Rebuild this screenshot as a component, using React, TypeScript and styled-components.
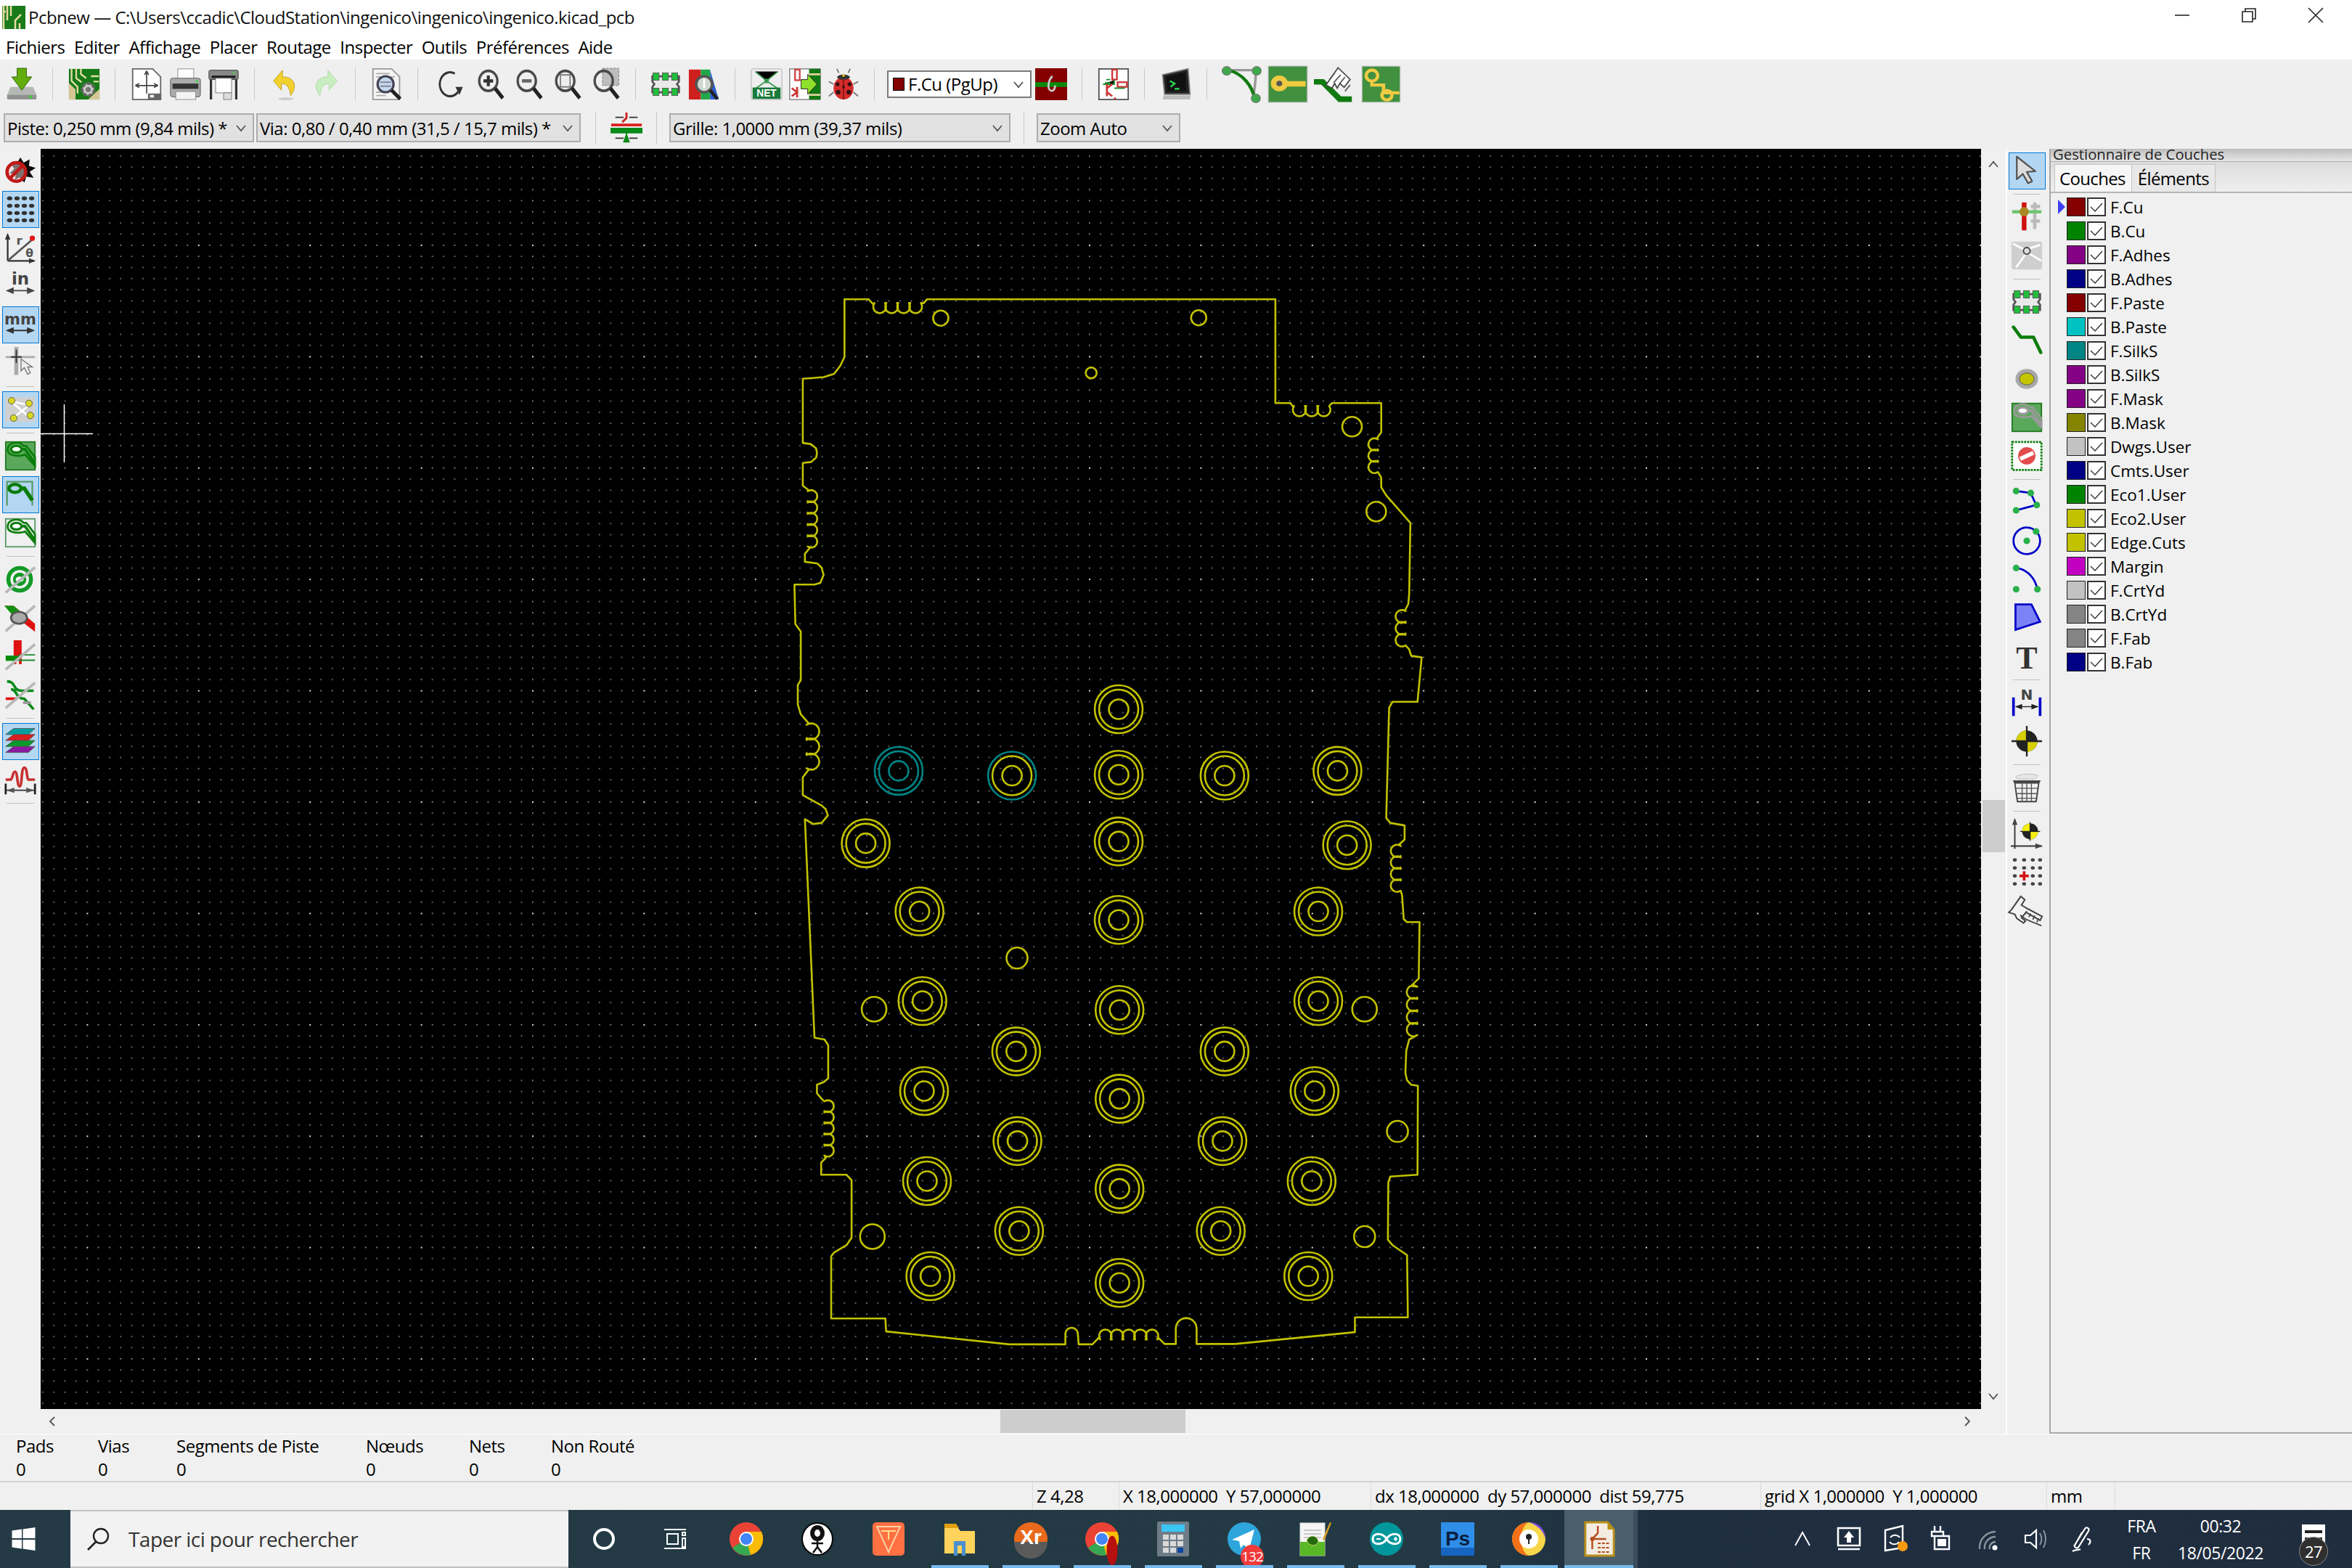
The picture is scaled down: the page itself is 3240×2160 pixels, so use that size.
import React from 'react';
import styled, { createGlobalStyle } from 'styled-components';

const GlobalStyle = createGlobalStyle`
  html, body { margin: 0; padding: 0; background: #f0f0f0; }
  body { font-family: "Open Sans", "Liberation Sans", sans-serif; }
`;

const Window = styled.div`
  width: 3240px;
  height: 2160px;
  display: flex;
  flex-direction: column;
  overflow: hidden;
  font-size: 24px;
  letter-spacing: -0.5px;
  color: #000;
`;

const TitleBar = styled.div`
  height: 50px;
  box-sizing: border-box;
  background: #fff;
  display: flex;
  align-items: center;
  padding: 0 6px 3px 3px;
  gap: 4px;
  color: #111;
`;

const TitleText = styled.div`
  flex: 1;
  white-space: pre;
`;

const WinButton = styled.div`
  width: 88px;
  height: 40px;
  margin-top: -6px;
  display: flex;
  align-items: center;
  justify-content: center;
`;

const MenuBar = styled.div`
  height: 32px;
  box-sizing: border-box;
  background: #fff;
  display: flex;
  gap: 12.5px;
  padding: 0 0 3px 8px;
  align-items: center;
`;

const Toolbar = styled.div<{ $h: number; $pt?: number }>`
  height: ${p => p.$h}px;
  box-sizing: border-box;
  padding-top: ${p => p.$pt ?? 0}px;
  background: #efefef;
  display: flex;
  align-items: center;
  padding-left: 3px;
  flex: none;
`;

const Tool = styled.div<{ $w?: number }>`
  width: ${p => p.$w ?? 53}px;
  height: 54px;
  flex: none;
  display: flex;
  align-items: center;
  justify-content: center;
`;

const HSep = styled.div<{ $w?: number }>`
  width: ${p => p.$w ?? 33}px;
  height: 44px;
  flex: none;
  display: flex;
  justify-content: center;
  &::before { content: ''; width: 1px; background: #c8c8c8; }
`;

const Combo = styled.div<{ $w: number; $white?: boolean; $ml?: number }>`
  width: ${p => p.$w}px;
  height: ${p => (p.$white ? 38 : 40)}px;
  margin-left: ${p => p.$ml ?? 0}px;
  box-sizing: border-box;
  flex: none;
  border: 2px solid ${p => (p.$white ? '#7a7a7a' : '#adadad')};
  background: ${p => (p.$white ? '#fff' : '#e1e1e1')};
  display: flex;
  align-items: center;
  padding: 0 8px 0 3px;
  white-space: pre;
  justify-content: space-between;
`;

const ComboLabel = styled.span`
  display: flex;
  align-items: center;
  gap: 5px;
`;

const LayerDot = styled.span`
  width: 14px;
  height: 16px;
  background: #840000;
  border: 1px solid #000;
  margin-left: 3px;
`;

const Middle = styled.div`
  flex: 1;
  display: flex;
  min-height: 0;
`;

const VToolbar = styled.div<{ $w: number }>`
  width: ${p => p.$w}px;
  flex: none;
  background: #f0f0f0;
  display: flex;
  flex-direction: column;
  align-items: center;
  gap: 2px;
  padding-top: 4.5px;
  box-sizing: border-box;
`;

const VTool = styled.div<{ $active?: boolean }>`
  width: 51px;
  height: 51px;
  flex: none;
  box-sizing: border-box;
  display: flex;
  align-items: center;
  justify-content: center;
  background: ${p => (p.$active ? '#b3d7f3' : 'transparent')};
  border: 1px solid ${p => (p.$active ? '#0078d7' : 'transparent')};
`;

const VSep = styled.div`
  width: 38px;
  height: 9px;
  flex: none;
  display: flex;
  align-items: center;
  &::before { content: ''; flex: 1; height: 1px; background: #c0c0c0; }
`;

const CanvasColumn = styled.div`
  width: 2707px;
  flex: none;
  display: flex;
  flex-direction: column;
`;

const CanvasRow = styled.div`
  flex: 1;
  display: flex;
  min-height: 0;
`;

const Canvas = styled.svg`
  width: 2673px;
  height: 1736px;
  display: block;
  background: #000;
  flex: none;
`;

const VScroll = styled.div`
  flex: 1;
  background: #f0f0f0;
  display: flex;
  flex-direction: column;
  align-items: center;
  justify-content: space-between;
  position: relative;
  padding: 14px 0 10px;
`;

const VThumb = styled.div`
  position: absolute;
  top: 897px;
  left: 2px;
  right: 1px;
  height: 72px;
  background: #cdcdcd;
`;

const HScroll = styled.div`
  height: 34px;
  background: #f0f0f0;
  display: flex;
  align-items: center;
  justify-content: space-between;
  position: relative;
  padding: 0 45px 0 8px;
  flex: none;
`;

const HThumb = styled.div`
  position: absolute;
  left: 1322px;
  top: 1px;
  bottom: 1px;
  width: 255px;
  background: #cdcdcd;
`;

const WhiteLine = styled.div`
  width: 2px;
  background: #fff;
  flex: none;
`;

const Sash = styled.div`
  width: 4px;
  flex: none;
  background: #f0f0f0;
`;

const LayerPanel = styled.div`
  flex: 1;
  border-left: 2px solid #a8a8a8;
  border-bottom: 2px solid #a8a8a8;
  background: #f0f0f0;
  display: flex;
  flex-direction: column;
`;

const PanelCaption = styled.div`
  height: 17px;
  line-height: 14px;
  font-size: 20.3px;
  letter-spacing: 0;
  padding-left: 3px;
  color: #222;
  background: linear-gradient(#bdbdbd, #e6e6e6);
  border-bottom: 1px solid #b0b0b0;
`;

const TabStrip = styled.div`
  height: 41px;
  display: flex;
  align-items: flex-end;
  padding-left: 5px;
  background: linear-gradient(#dcdcdc, #efefef);
  border-bottom: 2px solid #b4b4b4;
`;

const Tab = styled.div<{ $active?: boolean }>`
  height: 38px;
  box-sizing: border-box;
  padding: 0 8px 0 ${p => (p.$active ? 6 : 8)}px;
  display: flex;
  align-items: center;
  border: 1px solid #c4c4c4;
  border-bottom: none;
  margin-left: ${p => (p.$active ? 0 : -1)}px;
  background: ${p => (p.$active ? '#f6f6f6' : '#e8e8e8')};
  letter-spacing: -0.65px;
`;

const LayerList = styled.div`
  display: flex;
  flex-direction: column;
  gap: 7px;
  padding: 6px 0 0 22px;
`;

const LayerRow = styled.div`
  height: 26px;
  display: flex;
  align-items: center;
  position: relative;
  letter-spacing: 0;
  font-size: 22.5px;
`;

const ActiveArrow = styled.span`
  position: absolute;
  left: -12px;
  top: 3px;
  border-left: 10px solid #3f3ff5;
  border-top: 10px solid transparent;
  border-bottom: 10px solid transparent;
`;

const Swatch = styled.span<{ $c: string }>`
  width: 26px;
  height: 26px;
  box-sizing: border-box;
  border: 1px solid #222;
  background: ${p => p.$c};
`;

const Check = styled.span`
  width: 26px;
  height: 26px;
  box-sizing: border-box;
  border: 2px solid #333;
  background: #fff;
  margin: 0 6px 0 2px;
  display: flex;
  align-items: center;
  justify-content: center;
`;

const MsgPanel = styled.div`
  height: 67px;
  flex: none;
  border-bottom: 2px solid #d4d4d4;
  border-top: 1px solid #fff;
  background: #f0f0f0;
  display: flex;
  padding-left: 22px;
  box-sizing: border-box;
`;

const MsgCol = styled.div<{ $w: number }>`
  width: ${p => p.$w}px;
  display: flex;
  flex-direction: column;
  gap: 5px;
  padding-top: 2px;
  line-height: 27px;
`;

const StatusBar = styled.div`
  height: 38px;
  flex: none;
  background: #f0f0f0;
  display: flex;
`;

const StatusCell = styled.div<{ $w: number }>`
  width: ${p => p.$w}px;
  box-sizing: border-box;
  border-right: 1px solid #dcdcdc;
  padding: 0 0 2px 5px;
  display: flex;
  align-items: center;
  white-space: pre;
`;

const Taskbar = styled.div`
  height: 80px;
  flex: none;
  display: flex;
  align-items: stretch;
  background: linear-gradient(90deg, #243a45 0%, #233944 60%, #1f2e40 72%, #1f2d3f 100%);
  color: #fff;
`;

const StartButton = styled.div`
  width: 97px;
  flex: none;
  display: flex;
  align-items: center;
  justify-content: center;
  padding-right: 32px;
  box-sizing: border-box;
`;

const SearchBox = styled.div`
  width: 686px;
  flex: none;
  box-sizing: border-box;
  background: #f2f2f2;
  border: 2px solid #c0c0c0;
  border-left: none;
  border-right: none;
  display: flex;
  align-items: center;
  gap: 26px;
  padding-left: 22px;
  color: #333;
  font-size: 28px;
  letter-spacing: -0.55px;
`;

const TaskSlot = styled.div<{ $running?: boolean; $current?: boolean }>`
  width: ${p => (p.$current ? 95 : 98)}px;
  flex: none;
  position: relative;
  display: flex;
  align-items: center;
  justify-content: center;
  background: ${p => (p.$current ? '#4a5e6c' : 'transparent')};
  &::after {
    content: '';
    display: ${p => (p.$running ? 'block' : 'none')};
    position: absolute;
    left: ${p => (p.$current ? 0 : 10)}px;
    right: ${p => (p.$current ? 0 : 9)}px;
    bottom: 0;
    height: 4px;
    background: #76b9ed;
  }
`;

const TaskOverlay = styled.div`
  position: absolute;
  left: 50px;
  top: 34px;
`;

const TaskBadge = styled.div`
  position: absolute;
  left: 44px;
  top: 48px;
  width: 32px;
  height: 32px;
  border-radius: 50%;
  background: #f03a3a;
  color: #fff;
  font-size: 19px;
  letter-spacing: -1px;
  display: flex;
  align-items: center;
  justify-content: center;
`;

const CurrentEdge = styled.div`
  width: 6px;
  flex: none;
  background: #3b4d5c;
`;

const TrayGroup = styled.div`
  margin-left: auto;
  display: flex;
  align-items: stretch;
`;

const TraySlot = styled.div`
  width: 64px;
  display: flex;
  align-items: center;
  justify-content: center;
`;

const ClockCol = styled.div<{ $w: number; $ml?: number }>`
  width: ${p => p.$w}px;
  margin-left: ${p => p.$ml ?? 0}px;
  display: flex;
  flex-direction: column;
  align-items: center;
  justify-content: center;
  gap: 9px;
  line-height: 28px;
  letter-spacing: -0.4px;
  font-size: 23px;
`;

const NotifySlot = styled.div`
  width: 107px;
  position: relative;
  display: flex;
  align-items: center;
  justify-content: center;
`;

const NotifyBadge = styled.div`
  position: absolute;
  left: 34px;
  top: 37px;
  width: 38px;
  height: 38px;
  border-radius: 50%;
  background: #2f2f2f;
  border: 1px solid #888;
  display: flex;
  align-items: center;
  justify-content: center;
  font-size: 22px;
`;

const IconSvg = styled.svg<{ $w: number; $h: number }>`
  width: ${p => p.$w}px;
  height: ${p => p.$h}px;
  display: block;
  flex: none;
  overflow: visible;
`;

const Mag = ({ children }: { children?: React.ReactNode }) => (
  <>
    {children}
    <circle cx="20" cy="19" r="15" fill="none" stroke="#4a4a4a" strokeWidth="4" />
    <path d="M31 30 44 45" stroke="#222" strokeWidth="6" />
  </>
);

const Footprint = ({ color = '#1fbf3a' }: { color?: string }) => (
  <>
    <path d="M4 12h40v8l-3 4 3 4v8H4v-8l3-4-3-4z" fill="#e9e9e9" stroke="#555" strokeWidth="3" />
    {[5, 19, 33].map(x => (
      <React.Fragment key={x}>
        <rect x={x} y="7" width="9" height="11" fill={color} stroke="#555" />
        <rect x={x} y="30" width="9" height="11" fill={color} stroke="#555" />
      </React.Fragment>
    ))}
  </>
);

/* pad with a track leaving it, used by the zone tools */
const Zone = ({ fill, outer, body }: { fill?: string; outer: string; body: string }) => (
  <>
    <rect x="2" y="3" width="44" height="42" fill={fill ?? 'none'} stroke={outer} strokeWidth="2" />
    <path d="M5 15C5 7 12 4 18 4c5 0 8 2 11 5h4l13 17v13L31 22c-8 3-26 3-26-7z" fill="none" stroke={body} strokeWidth="3" />
    <ellipse cx="18" cy="14" rx="8" ry="5" fill="#fff" stroke={body} strokeWidth="3.5" />
    <path d="M27 14h4l12 17v5" fill="none" stroke={body} strokeWidth="4" />
  </>
);

const Diagonal = () => <path d="M2 44 46 6" stroke="#b8b8b8" strokeWidth="4" />;

const icons: Record<string, React.ReactNode> = {
  save: <><path d="M7 28h34l5 12v5a2 2 0 0 1-2 2H4a2 2 0 0 1-2-2v-5z" fill="#b5b8b5" /><path d="M2 40h44v5a2 2 0 0 1-2 2H4a2 2 0 0 1-2-2z" fill="#8f928f" /><rect x="35" y="41" width="4" height="4" fill="#34d034" /><path d="M17 0h14v13h8L24 33 9 13h8z" fill="#62ad0c" stroke="#2a5e00" /></>,
  setup: <><rect x="1" y="1" width="46" height="46" fill="#167a16" /><path d="M1 47V22l10 10v15zM30 47l17-16v16z" fill="#d7c695" /><path d="M5 1v18l9 9v10M12 1v14l8 6M19 1v8l8 6M34 12h12M38 20h8" stroke="#e8dca8" strokeWidth="2.5" fill="none" /><circle cx="30" cy="32" r="9" fill="#cfcfcf" stroke="#666" strokeWidth="4" strokeDasharray="6 2" /><circle cx="30" cy="32" r="4" fill="#777" /></>,
  page: <><path d="M3 1h30l12 12v34H3z" fill="#fff" stroke="#666" strokeWidth="2" /><path d="M24 4v34M7 26h34M24 4l-3 6M24 4l3 6M7 26l6-3M7 26l6 3M41 26l-6-3M41 26l-6 3" stroke="#444" strokeWidth="1.8" /><rect x="26" y="38" width="20" height="9" fill="#666" /><rect x="29" y="40" width="6" height="4" fill="#eee" /></>,
  print: <><rect x="13" y="1" width="24" height="16" fill="#fff" stroke="#888" /><rect x="2" y="15" width="45" height="28" rx="3" fill="#a9acab" stroke="#555" /><rect x="5" y="23" width="39" height="8" fill="#333" /><rect x="10" y="35" width="30" height="12" fill="#f4f4f4" stroke="#888" /><rect x="40" y="18" width="3" height="3" fill="#3bd13b" /></>,
  plot: <><rect x="2" y="3" width="44" height="14" rx="2" fill="#888" stroke="#333" /><rect x="6" y="11" width="36" height="4" fill="#222" /><rect x="12" y="15" width="24" height="22" fill="#fff" stroke="#777" /><path d="M24 37h12v10H24z" fill="#ddd" stroke="#777" /><path d="M5 17v30M43 17v30" stroke="#333" strokeWidth="3.5" /><rect x="38" y="5" width="3" height="3" fill="#3bd13b" /></>,
  undo: <><path d="M18 3 2 19l14 14V23c8 0 14 4 16 18 6-6 8-12 6-18-2-7-10-10-20-10z" fill="#f2d12e" stroke="#b8991d" /><ellipse cx="24" cy="46" rx="13" ry="2" fill="#ccc" /></>,
  redo: <><path d="M30 3l16 16-14 14V23c-8 0-14 4-16 18-6-6-8-12-6-18 2-7 10-10 20-10z" fill="#c8edc0" stroke="#a9d9a0" /></>,
  find: <><path d="M3 1h28l12 12v34H3z" fill="#f4f4f4" stroke="#999" strokeWidth="2" /><path d="M8 8h20M8 13h28M8 36h14M8 41h14" stroke="#aaa" strokeWidth="2" /><circle cx="22" cy="24" r="12" fill="#c4d8ee" stroke="#445" strokeWidth="3.5" /><path d="M14 21h16M14 27h16" stroke="#889" strokeWidth="2" /><path d="M31 33 44 46" stroke="#222" strokeWidth="5.5" /></>,
  refresh: <><path d="M31 8a18 18 0 1 0 8 24" fill="none" stroke="#333" strokeWidth="3.5" /><path d="M32 28h13l-6 12z" fill="#333" /></>,
  zin: <Mag><path d="M20 11v16M12 19h16" stroke="#333" strokeWidth="5" /></Mag>,
  zout: <Mag><path d="M12 19h16" stroke="#666" strokeWidth="5" /></Mag>,
  zfit: <Mag><rect x="12" y="10" width="16" height="18" fill="#eee" stroke="#777" strokeWidth="2" /></Mag>,
  zsel: <Mag><rect x="18" y="0" width="27" height="26" fill="#bdbdbd" stroke="#777" strokeDasharray="4 2" /></Mag>,
  inspect: <><rect x="1" y="2" width="18" height="45" fill="#d01f1f" /><rect x="19" y="2" width="14" height="45" fill="#21a84a" /><path d="M33 3l13 44H33z" fill="#2a5fd0" /><circle cx="24" cy="24" r="12" fill="#cfd8cf" stroke="#555" strokeWidth="4" /><path d="M24 16v14" stroke="#fff" strokeWidth="3" /><path d="M33 33 44 46" stroke="#222" strokeWidth="5" /></>,
  net: <><rect x="1" y="1" width="46" height="46" rx="2" fill="#eee" stroke="#aaa" /><path d="M7 5 24 19 41 5M24 19 8 30M24 19l16 11" stroke="#3a9a50" strokeWidth="2" /><circle cx="24" cy="19" r="3.5" fill="#3a9a50" /><rect x="3" y="29" width="42" height="17" fill="#1a7a3a" /><text x="24" y="43" fill="#fff" fontSize="15" fontWeight="700" textAnchor="middle" fontFamily="Liberation Sans" letterSpacing="0">NET</text></>,
  imp: <><rect x="1" y="1" width="46" height="46" fill="#fff" stroke="#444" /><path d="M30 1h17v46H30z" fill="#127a12" /><rect x="9" y="2" width="7" height="16" fill="none" stroke="#c44" strokeWidth="2.5" /><path d="M4 30l8 6-8 6M12 28v16" stroke="#c33" strokeWidth="3" fill="none" /><path d="M30 9h17M30 40h17" stroke="#e0d2a0" strokeWidth="3" /><path d="M18 17h10V9l14 15-14 15v-8H18z" fill="#8fe02a" stroke="#222" /></>,
  bug: <><ellipse cx="24" cy="30" rx="15" ry="17" fill="#d52a2a" /><path d="M24 13v34" stroke="#611" strokeWidth="1.5" /><circle cx="15" cy="24" r="3" fill="#311" /><circle cx="33" cy="24" r="3" fill="#311" /><circle cx="16" cy="36" r="3.5" fill="#311" /><circle cx="32" cy="36" r="3.5" fill="#311" /><circle cx="24" cy="28" r="2" fill="#311" /><path d="M14 14c2-6 18-6 20 0l-5 3H19z" fill="#333" /><circle cx="24" cy="11" r="2" fill="#e8c520" /><path d="M17 7 14 1M31 7l3-6M9 24 2 20M39 24l7-4M9 36l-7 6M39 36l7 6" stroke="#777" strokeWidth="2" /></>,
  via: <><rect x="0" y="0" width="48" height="48" fill="#840000" /><path d="M0 21h48v7H0z" fill="#0a8a0a" /><path d="M26 12c-3 2-6 8-6 15 0 4 2 7 5 7s5-4 5-8" fill="none" stroke="#ccc" strokeWidth="3" /></>,
  sch: <><rect x="2" y="1" width="44" height="46" fill="#fff" stroke="#555" strokeWidth="2" /><rect x="22" y="2" width="7" height="15" fill="none" stroke="#c33" strokeWidth="2.5" /><rect x="30" y="21" width="14" height="7" fill="none" stroke="#c33" strokeWidth="2.5" /><path d="M25 18v6H8M19 17h-6M19 22h-8" stroke="#1a8a2a" strokeWidth="2" /><path d="M14 24v18M14 30l8-6M14 36l8 6M26 44v3" stroke="#c33" strokeWidth="3" /><path d="M25 30h16" stroke="#1a8a2a" strokeWidth="2" /></>,
  term: <><path d="M4 10 42 1l3 38H7z" fill="#222" stroke="#777" strokeWidth="2" /><path d="M9 13l29-7 2 28H11z" fill="#111" /><path d="M15 19l7 4-6 5M22 31h7" stroke="#2fe05a" strokeWidth="2.5" fill="none" /><path d="M5 41h41l-1 6H4z" fill="#bdbdbd" /></>,
  route: <><path d="M7 6h36M41 8c0 16-3 28-3 36" stroke="#999" strokeWidth="3" fill="none" /><path d="M7 6c18 4 30 20 33 38" stroke="#127a12" strokeWidth="4" fill="none" /><circle cx="6" cy="7" r="5.5" fill="#3ea84a" stroke="#777" /><circle cx="42" cy="7" r="5.5" fill="#3ea84a" stroke="#777" /><circle cx="41" cy="42" r="5.5" fill="#3ea84a" stroke="#777" /></>,
  key: <><rect x="1" y="1" width="46" height="46" fill="#41903f" stroke="#bbb" /><path d="M14 20h31v7H14z" fill="#efcb43" /><circle cx="14" cy="23" r="10" fill="#efcb43" /><circle cx="14" cy="23" r="3.5" fill="#555" /></>,
  tune: <><path d="M0 21h10l20 22h14" stroke="#0f7a0f" strokeWidth="7" fill="none" /><path d="M14 25 28 3l14 15-7 10-5-5-3 6-3-6-3 6z" fill="#fff" stroke="#444" strokeWidth="1.5" /><path d="M18 18l6-8M23 22l8-10M30 23l6-8M36 33l6-8" stroke="#555" strokeWidth="1.5" /></>,
  tracks: <><rect x="1" y="1" width="46" height="46" fill="#41903f" stroke="#ccc" /><path d="M13 21v4h14v10h19" stroke="#efcb43" strokeWidth="4" fill="none" /><circle cx="13" cy="13" r="7" fill="none" stroke="#efcb43" strokeWidth="4" /><circle cx="31" cy="38" r="6" fill="none" stroke="#efcb43" strokeWidth="4" /></>,
  diff: <><path d="M24 2v8l-6 6" stroke="#c22" strokeWidth="3" fill="none" /><path d="M8 9h12M40 9H28" stroke="#333" strokeWidth="2" /><path d="M2 18h44v4H2z" fill="#d91f1f" /><path d="M2 25h44v6H2zM24 31v14" fill="#0a8a1a" stroke="#0a8a1a" strokeWidth="2" /><path d="M24 31l-5 14h10z" fill="#0a8a1a" /><path d="M8 39h12M40 39H28" stroke="#333" strokeWidth="2" /></>,
  noDrc: <><path d="M24 4l5 8 9-5-1 10 10 3-9 6 6 9-11-2-3 9-7-8-7 4 1-8-9-2 7-7-6-7 10-1z" fill="#0a0a0a" /><circle cx="18" cy="26" r="14" fill="#f3d4d4" fillOpacity=".5" stroke="#c01818" strokeWidth="5" /><path d="M8 36 28 16" stroke="#c01818" strokeWidth="5" /></>,
  grid: <>{[8, 19, 30, 41].map(x => [8, 19, 30, 41].map(y => <ellipse key={`${x}-${y}`} cx={x} cy={y} rx="4" ry="3" fill="#333" />))}</>,
  polar: <><path d="M5 44h40M5 44V6" stroke="#333" strokeWidth="2.5" /><path d="M5 2 1 12h8zM47 44l-10-4v8z" fill="#333" /><path d="M5 44 42 12" stroke="#555" strokeWidth="3" /><circle cx="42" cy="10" r="4" fill="#e31414" /><text x="18" y="20" fontSize="18" fontWeight="700" fill="#555" fontFamily="DejaVu Sans" letterSpacing="0">r</text><text x="32" y="38" fontSize="17" fontWeight="700" fill="#555" fontFamily="DejaVu Sans" letterSpacing="0">θ</text></>,
  inch: <><text x="24" y="22" fontSize="25" fontWeight="700" textAnchor="middle" fill="#444" fontFamily="DejaVu Sans" letterSpacing="0">in</text><path d="M5 31h38" stroke="#444" strokeWidth="2" /><path d="M2 31l12-5v10zM46 31l-12-5v10z" fill="#444" /></>,
  mm: <><text x="24" y="24" fontSize="23" fontWeight="700" textAnchor="middle" fill="#444" fontFamily="DejaVu Sans" letterSpacing="0">mm</text><path d="M5 33h38" stroke="#333" strokeWidth="2" /><path d="M2 33l12-5v10zM46 33l-12-5v10z" fill="#333" /></>,
  cursor: <><path d="M2 15h44" stroke="#aaa" strokeWidth="3" /><path d="M18 0v42" stroke="#aaa" strokeWidth="6" /><path d="M18 4v20M10 15h16" stroke="#333" strokeWidth="2" /><path d="M25 18v18l5-5 5 10 4-2-4-9h7z" fill="#eee" stroke="#777" strokeWidth="1.5" /></>,
  rats: <><rect x="2" y="5" width="44" height="38" fill="#d0d0d0" /><path d="M10 12l30 6M14 36l28-22M10 12l28 24" stroke="#fff" strokeWidth="3" /><circle cx="11" cy="11" r="5" fill="#d8d820" stroke="#555" /><circle cx="37" cy="15" r="5" fill="#d8d820" stroke="#555" /><circle cx="14" cy="37" r="5" fill="#d8d820" stroke="#555" /><circle cx="39" cy="33" r="5" fill="#d8d820" stroke="#555" /></>,
  zoneFull: <Zone fill="#5aa85a" outer="#207a20" body="#0b7d0b" />,
  zoneBlue: <><path d="M4 41V5h38v36" fill="none" stroke="#5a9a6a" strokeWidth="2.5" /><ellipse cx="16" cy="15" rx="9" ry="6" fill="none" stroke="#0b7d0b" strokeWidth="5" /><path d="M24 15h6l12 18" stroke="#0b7d0b" strokeWidth="6" fill="none" /></>,
  zoneOut: <Zone outer="#5a9a6a" body="#0b7d0b" />,
  viaSketch: <><circle cx="23" cy="24" r="17" fill="none" stroke="#139a27" strokeWidth="6" /><circle cx="23" cy="24" r="10" fill="#139a27" /><ellipse cx="23" cy="24" rx="6" ry="4" fill="#fff" /><Diagonal /></>,
  viaCut: <><path d="M0 6h14l32 27v12L28 31z" fill="#df1212" /><path d="M0 6h14l15 13-10 9z" fill="#129012" /><Diagonal /><ellipse cx="22" cy="24" rx="12" ry="9" fill="#aaa" stroke="#555" strokeWidth="3" /></>,
  trackCut: <><path d="M14 0h12v36h-4V24h-4v12h-4z" fill="#df1212" /><path d="M2 23h20v8H2z" fill="#0a8a0a" /><path d="M22 22h24M22 30h24" stroke="#1a8a2a" strokeWidth="2" /><Diagonal /></>,
  diffCut: <><path d="M4 4c14 0 8 14 22 14h18M10 16c10 0 6 14 20 14l14 16" fill="none" stroke="#0a8a1a" strokeWidth="4" /><path d="M2 30h16" stroke="#df1212" strokeWidth="4" /><path d="M28 36h12" stroke="#999" strokeWidth="4" /><Diagonal /></>,
  layers: <><path d="M2 14 14 5h32L36 14z" fill="#02a0a0" stroke="#555" /><path d="M2 23 14 14h32L36 23z" fill="#d91f1f" stroke="#555" /><path d="M2 32 14 23h32L36 32z" fill="#0a9a2a" stroke="#555" /><path d="M2 41 14 32h32L36 41z" fill="#8a1aa0" stroke="#555" /></>,
  meander: <><path d="M2 24h7c4 0 3-12 7-12s3 22 7 22 2-28 7-28 3 18 7 18h9" fill="none" stroke="#c83232" strokeWidth="4" /><path d="M2 30v16M46 30v16" stroke="#222" strokeWidth="3" /><path d="M3 40h42" stroke="#333" strokeWidth="2" /><path d="M3 40l12-4v8zM45 40l-12-4v8z" fill="#555" /></>,
  select: <path d="M9 3v34l9-8 8 14 6-3-8-14 13-1z" fill="#ddd" stroke="#555" strokeWidth="2.5" strokeLinejoin="round" />,
  hilite: <><path d="M30 8h14M30 30h14M36 2v40" stroke="#bbb" strokeWidth="5" /><path d="M2 16h44" stroke="#6fc56f" strokeWidth="5" /><path d="M20 2v42" stroke="#d01010" strokeWidth="7" /><circle cx="20" cy="16" r="7" fill="#a88824" /></>,
  ratsLocal: <><rect x="1" y="3" width="46" height="42" rx="3" fill="#cfcfcf" /><path d="M22 16 3 6M26 14 44 8M22 22 8 42M26 20l20 12" stroke="#fff" strokeWidth="3" /><circle cx="24" cy="17" r="5" fill="#ddd" stroke="#444" strokeWidth="2" /></>,
  footprint: <Footprint />,
  track: <path d="M4 4l11 15h19l11 23" fill="none" stroke="#0b7d0b" strokeWidth="5" strokeLinecap="round" strokeLinejoin="round" />,
  viaDot: <><ellipse cx="24" cy="24" rx="17" ry="15" fill="#a8a8a8" /><ellipse cx="24" cy="24" rx="11" ry="9" fill="#c4c400" stroke="#555" /></>,
  zoneAdd: <Zone fill="#5aa85a" outer="#207a20" body="#9a9a9a" />,
  keepout: <><rect x="2" y="3" width="44" height="42" fill="#fff" stroke="#0b7d0b" strokeWidth="3" strokeDasharray="3 1.5" /><circle cx="24" cy="24" r="13" fill="#e34c4c" /><rect x="13" y="21" width="22" height="6" fill="#fff" transform="rotate(-25 24 24)" /></>,
  line: <><path d="M8 7l22 3 8 18-30 8" fill="none" stroke="#0000c8" strokeWidth="3" /><circle cx="8" cy="7" r="5" fill="#29b04a" /><circle cx="30" cy="10" r="5" fill="#29b04a" /><circle cx="39" cy="28" r="5" fill="#29b04a" /><circle cx="8" cy="36" r="5" fill="#29b04a" /></>,
  circle: <><circle cx="24" cy="24" r="20" fill="none" stroke="#0000c8" strokeWidth="3" /><circle cx="24" cy="24" r="5" fill="#29b04a" /><circle cx="38" cy="10" r="5" fill="#29b04a" /></>,
  arc: <><path d="M8 7c16 2 28 14 32 32" fill="none" stroke="#0000c8" strokeWidth="3" /><circle cx="8" cy="7" r="5" fill="#29b04a" /><circle cx="40" cy="39" r="5" fill="#29b04a" /><circle cx="8" cy="39" r="5" fill="#29b04a" /></>,
  poly: <path d="M7 4h24l13 26L7 42z" fill="#7b82f5" stroke="#0000c8" strokeWidth="3" />,
  text: <text x="24" y="42" fontSize="48" fontWeight="700" textAnchor="middle" fill="#333" fontFamily="Liberation Serif" letterSpacing="0">T</text>,
  dim: <><text x="24" y="20" fontSize="22" fontWeight="700" textAnchor="middle" fill="#444" fontFamily="DejaVu Sans" letterSpacing="0">N</text><path d="M4 16v28M44 16v28" stroke="#0000c8" strokeWidth="4" /><path d="M8 30h32" stroke="#222" strokeWidth="1.5" /><path d="M6 30l11-4v8zM42 30l-11-4v8z" fill="#222" /></>,
  target: <><circle cx="24" cy="24" r="16" fill="#222" /><path d="M24 8a16 16 0 0 0-16 16h16zM24 40a16 16 0 0 0 16-16H24z" fill="#d8d000" /><path d="M1 24h46M24 1v46" stroke="#222" strokeWidth="2.5" /></>,
  trash: <><path d="M7 8c6-5 26-6 34-2l-5 5H10z" fill="#e6e6e6" stroke="#bbb" /><path d="M3 13h42l-2 4H5z" fill="#444" /><path d="M6 17l4 28h28l4-28z" fill="none" stroke="#444" strokeWidth="2" /><path d="M6 25h36M7 33h34M8 40h32M17 17v28M24 17v28M31 17v28" stroke="#555" strokeWidth="1.5" /></>,
  origin: <><path d="M6 2v44M0 42h47" stroke="#333" strokeWidth="2" /><path d="M6 0 2 10h8zM48 42l-11-4v8z" fill="#444" /><circle cx="29" cy="20" r="12" fill="#222" /><path d="M29 8a12 12 0 0 0-12 12h12zM29 32a12 12 0 0 0 12-12H29z" fill="#f3ee10" /><path d="M14 20h30M29 6v28" stroke="#222" strokeWidth="1.5" /></>,
  gridOrigin: <>{[6, 20, 33, 44].map(x => [5, 17, 29, 41].map(y => <ellipse key={`${x}-${y}`} cx={x} cy={y} rx="3" ry="2.5" fill="#444" />))}<path d="M20 22v14M13 29h14" stroke="#d41414" strokeWidth="4" /></>,
  caliper: <><path d="M1 22 15 2l6 5-5 8 10 6 21 11-3 6-21-12-7 8 6 5-3 3-10-7-3-6-9-3z" fill="#f3f3f3" stroke="#444" strokeWidth="2.2" /><path d="M24 24l-3 5M30 28l-3 5M36 31l-3 6M42 35l-3 6" stroke="#444" strokeWidth="1.8" /><path d="M14 30l8 6 14 6 10 4" fill="none" stroke="#444" strokeWidth="2" /></>
};

const Icon = ({ name, w = 44, h = 44 }: { name: string; w?: number; h?: number }) => (
  <IconSvg viewBox="0 0 48 48" preserveAspectRatio="none" $w={w} $h={h}>{icons[name]}</IconSvg>
);

const taskIcons: Record<string, React.ReactNode> = {
  chrome: <><circle cx="24" cy="24" r="23" fill="#ea4335" /><path d="M24 24 5 36A23 23 0 0 0 30 46z" fill="#34a853" /><path d="M24 24l6 22A23 23 0 0 0 45 14H24z" fill="#fbbc05" /><circle cx="24" cy="24" r="10" fill="#fff" /><circle cx="24" cy="24" r="8" fill="#4285f4" /></>,
  figure: <><ellipse cx="24" cy="24" rx="22" ry="23" fill="#050505" /><ellipse cx="24" cy="24" rx="20" ry="21" fill="#fff" /><ellipse cx="24" cy="16" rx="10" ry="11" fill="#111" /><ellipse cx="24" cy="16" rx="5" ry="6" fill="#fff" stroke="#111" strokeWidth="2" /><path d="M24 27v8M16 30h16M24 35l-6 8M24 35l6 8" stroke="#111" strokeWidth="2.5" /></>,
  orange: <><rect x="2" y="1" width="44" height="46" rx="5" fill="#ff7043" /><path d="M8 7h32L24 42z" fill="none" stroke="#ffd0a0" strokeWidth="2" /><path d="M14 13h20M24 13v12" stroke="#ffe28a" strokeWidth="2" /></>,
  folder: <><path d="M3 8h18l4 5h20v31H3z" fill="#ffd35c" /><path d="M3 3h16l4 6H3z" fill="#e0a010" /><path d="M16 27h16v20h-5V33h-6v14h-5z" fill="#4a90d0" /></>,
  xr: <><circle cx="24" cy="24" r="23" fill="#e96a1c" /><path d="M1 28h46a23 23 0 0 1-46 0z" fill="#5a5a5a" /><text x="24" y="31" fontSize="28" fontWeight="700" fill="#fff" textAnchor="middle" fontFamily="Liberation Sans" letterSpacing="0">Xr</text></>,
  bugOverlay: <ellipse cx="24" cy="24" rx="14" ry="22" fill="#b71010" />,
  calc: <><rect x="2" y="0" width="44" height="48" rx="2" fill="#6e7c88" /><rect x="8" y="4" width="32" height="10" fill="#3ac5f2" />{[10, 20, 30].map(x => [18, 27, 36].map(y => <rect key={`${x}${y}`} x={x} y={y} width="8" height="7" fill={y === 36 && x === 30 ? '#0d47a1' : '#d9d9d9'} />))}</>,
  telegram: <><circle cx="24" cy="24" r="23" fill="#2ea6dc" /><path d="M7 25 38 11l-7 27-8-6-4 5-2-10z" fill="#fff" /></>,
  notepad: <><rect x="3" y="2" width="34" height="45" fill="#f5f5f5" stroke="#ddd" /><path d="M3 28h34v19H3z" fill="#5ab826" /><path d="M8 12h24M8 17h24M8 22h24" stroke="#bbb" strokeWidth="1.5" /><path d="M34 24 44 1l2 1-10 25z" fill="#d8a02a" /><path d="M12 26c4-8 12-8 16 0 0 8-12 10-16 0z" fill="#246b10" stroke="#ccd96a" /></>,
  arduino: <><circle cx="24" cy="24" r="23" fill="#00979c" /><path d="M5 24c0-9 14-9 19 0 5 9 19 9 19 0s-14-9-19 0c-5 9-19 9-19 0z" fill="none" stroke="#fff" strokeWidth="3" /><path d="M10 24h6M34 24h5M36.5 21v6" stroke="#fff" strokeWidth="2" /></>,
  ps: <><rect x="1" y="1" width="46" height="46" fill="#2f8ee8" /><path d="M1 36h46v11H1z" fill="#1565c0" /><text x="24" y="33" fontSize="28" fontWeight="700" fill="#0a1f3f" textAnchor="middle" fontFamily="Liberation Sans" letterSpacing="0">Ps</text></>,
  vpn: <><circle cx="24" cy="24" r="23" fill="#f7d64a" /><path d="M24 1a23 23 0 0 0 0 46c-14-6-14-40 0-46z" fill="#f27018" /><path d="M24 1c14 0 23 10 23 24-3-14-12-20-23-24z" fill="#7a4be8" /><circle cx="24" cy="24" r="13" fill="#fff" /><circle cx="24" cy="21" r="4" fill="#222" /><path d="M23 23h2v8h-2z" fill="#222" /></>,
  kicad: <><path d="M4 1h32l9 10v36H4z" fill="#f4ece0" stroke="#b8901a" strokeWidth="3" /><path d="M36 1l9 10h-9z" fill="#b8901a" /><path d="M22 6v10l-8 8v14M14 24h20" stroke="#b44a1f" strokeWidth="2.5" fill="none" /><circle cx="14" cy="24" r="3" fill="#b44a1f" /><path d="M22 30h16M22 36h16M22 42h16" stroke="#b44a1f" strokeWidth="2" strokeDasharray="4 2" /></>
};

const TaskIcon = ({ name, w = 48, h = 48 }: { name: string; w?: number; h?: number }) => (
  <IconSvg viewBox="0 0 48 48" preserveAspectRatio="none" $w={w} $h={h}>{taskIcons[name]}</IconSvg>
);

const leftTools: (string | [string, boolean])[] = [
  'noDrc', ['grid', true], 'polar', 'inch', ['mm', true], 'cursor', '-', ['rats', true], '-',
  'zoneFull', ['zoneBlue', true], 'zoneOut', '-', 'viaSketch', 'viaCut', 'trackCut', 'diffCut', '-',
  ['layers', true], 'meander', '-'
];

const rightTools: (string | [string, boolean])[] = [
  ['select', true], '-', 'hilite', 'ratsLocal', '-', 'footprint', 'track', 'viaDot', 'zoneAdd', 'keepout', '-',
  'line', 'circle', 'arc', 'poly', 'text', '-', 'dim', 'target', '-', 'trash', '-', 'origin', 'gridOrigin', 'caliper'
];

const VBar = ({ items, w }: { items: (string | [string, boolean])[]; w: number }) => (
  <VToolbar $w={w}>
    {items.map((it, i) => {
      if (it === '-') return <VSep key={i} />;
      const [name, active] = typeof it === 'string' ? [it, false] : it;
      return (
        <VTool key={i} $active={active}>
          <Icon name={name} />
        </VTool>
      );
    })}
  </VToolbar>
);

const layers: [string, string][] = [
  ['F.Cu', '#840000'], ['B.Cu', '#008400'], ['F.Adhes', '#840084'], ['B.Adhes', '#000084'], ['F.Paste', '#840000'],
  ['B.Paste', '#00c2c2'], ['F.SilkS', '#008484'], ['B.SilkS', '#840084'], ['F.Mask', '#840084'], ['B.Mask', '#848400'],
  ['Dwgs.User', '#c2c2c2'], ['Cmts.User', '#000084'], ['Eco1.User', '#008400'], ['Eco2.User', '#c2c200'],
  ['Edge.Cuts', '#c2c200'], ['Margin', '#c200c2'], ['F.CrtYd', '#c2c2c2'], ['B.CrtYd', '#848484'], ['F.Fab', '#848484'], ['B.Fab', '#000084']
];

const messages: [string, number][] = [
  ['Pads', 113], ['Vias', 108], ['Segments de Piste', 261], ['Nœuds', 142], ['Nets', 113], ['Non Routé', 200]
];

/* PCB drawing, coordinates are read from the full size screenshot */
type P = [number, number];
const a = (x: number, y: number): P => [1060 + x / 1.742, 390 + y / 2.24];
const b = (x: number, y: number): P => [1060 + x / 1.742, 1080 + y / 1.96];

// n round bumps between two points, pushed out along (dx, dy); dx/dy length is the depth
const scallops = (from: P, to: P, n: number, dx: number, dy: number): P[] => {
  const depth = Math.hypot(dx, dy);
  const nx = dx / depth;
  const ny = dy / depth;
  const step = Math.hypot(to[0] - from[0], to[1] - from[1]) / n;
  const ax = (to[0] - from[0]) / (step * n);
  const ay = (to[1] - from[1]) / (step * n);
  const r = n === 1 ? step / 2 : step * 0.54;
  const limit = ((n === 1 ? 90 : 125) * Math.PI) / 180;
  const off = Math.max(depth - r, 0);
  const out: P[] = [];
  for (let k = 0; k < n; k++) {
    const cx = from[0] + ax * step * (k + 0.5) + nx * off;
    const cy = from[1] + ay * step * (k + 0.5) + ny * off;
    for (let i = 0; i <= 10; i++) {
      const th = -limit + (2 * limit * i) / 10;
      out.push([cx + r * (Math.cos(th) * nx + Math.sin(th) * ax), cy + r * (Math.cos(th) * ny + Math.sin(th) * ay)]);
    }
  }
  return out;
};

const outline: P[] = [
  a(180, 50), a(238, 50), a(248, 64), ...scallops(a(250, 66), a(365, 66), 4, 0, 12), a(370, 62), a(378, 50),
  a(1214, 50), a(1214, 370), a(1250, 370), a(1257, 382), ...scallops(a(1257, 382), a(1345, 382), 3, 0, 13), a(1350, 370),
  a(1468, 370), a(1468, 460), a(1458, 478), ...scallops(a(1458, 480), a(1458, 585), 3, -12, 0), a(1468, 600), a(1468, 630),
  a(1480, 655), a(1538, 740), a(1535, 960), a(1533, 990), a(1525, 1010), ...scallops(a(1525, 1010), a(1525, 1120), 3, -13, 0),
  a(1535, 1130), a(1540, 1150), a(1565, 1155), a(1555, 1292), a(1495, 1292), a(1487, 1310),
  b(1480, 92), b(1490, 105), b(1524, 112), b(1524, 150), b(1512, 162), ...scallops(b(1510, 165), b(1510, 290), 4, -11, 0),
  b(1518, 300), b(1522, 365), b(1530, 373), b(1560, 373), b(1558, 525), b(1540, 545), ...scallops(b(1550, 545), b(1550, 680), 4, -12, 0),
  b(1535, 690), b(1528, 720), b(1526, 780), b(1530, 800), b(1540, 812), b(1556, 815), b(1555, 1055), b(1490, 1060), b(1485, 1075),
  b(1484, 1230), b(1495, 1245), b(1530, 1272), b(1532, 1440), b(1405, 1440), b(1405, 1480), b(1118, 1512), b(1025, 1512), b(1025, 1470),
  ...scallops(b(1025, 1470), b(975, 1470), 1, 0, -12), b(975, 1512), b(948, 1512), b(935, 1497),
  ...scallops(b(932, 1490), b(792, 1490), 5, 0, -8), b(790, 1495), b(775, 1513), b(742, 1513), b(740, 1485),
  ...scallops(b(740, 1485), b(710, 1485), 1, 0, -6), b(710, 1513), b(575, 1513), b(280, 1478), b(278, 1443), b(148, 1443), b(148, 1275),
  b(155, 1265), b(185, 1245), b(197, 1225), b(197, 1070), b(185, 1055), b(124, 1055), b(124, 1022), b(135, 1010),
  ...scallops(b(140, 1005), b(140, 855), 5, 8, 0), b(125, 850), b(114, 835), b(114, 812), b(130, 805), b(141, 795), b(141, 705), b(132, 690),
  b(108, 685), b(85, 95), b(105, 108), b(125, 105), b(140, 85), b(135, 68), b(125, 58), b(80, 30), a(80, 1525), a(95, 1500),
  ...scallops(a(100, 1500), a(100, 1360), 3, 8, 0), a(95, 1360), a(75, 1330), a(68, 1300), a(68, 1240), a(75, 1225), a(75, 1075), a(62, 1052),
  a(60, 930), a(108, 930), a(122, 925), a(130, 900), a(125, 878), a(115, 865), a(85, 860), a(85, 835), a(98, 815),
  ...scallops(a(100, 815), a(100, 640), 5, 8, 0), a(95, 640), a(80, 625), a(80, 555), a(100, 552), a(112, 538), a(114, 525), a(112, 510),
  a(100, 497), a(80, 493), a(80, 295), a(130, 290), a(155, 280), a(170, 255), a(180, 228)
];

const outlinePath = 'M' + outline.map(p => `${p[0].toFixed(1)} ${p[1].toFixed(1)}`).join('L') + 'Z';

const keys: P[] = [
  a(838, 1315), a(838, 1517), a(1092, 1520), a(1363, 1505),
  b(231, 160), b(838, 155), b(1386, 165), b(360, 344), b(838, 367), b(1317, 344), b(367, 586), b(840, 610), b(1317, 586),
  b(592, 722), b(1092, 722), b(371, 829), b(840, 850), b(1308, 829), b(595, 964), b(1087, 964), b(378, 1072), b(840, 1093),
  b(1301, 1072), b(599, 1207), b(1083, 1207), b(386, 1329), b(840, 1347), b(1293, 1329)
];

const holes: [P, number][] = [
  [a(411, 108), 10.5], [a(1030, 107), 10.5], [a(772, 277), 7.5], [a(1398, 443), 13.5], [a(1456, 705), 13.5],
  [b(594, 470), 14.5], [b(251, 608), 17], [b(1428, 608), 17], [b(1507, 938), 14.5], [b(247, 1222), 17], [b(1428, 1222), 14.5]
];

const Y = '#c2c200';
const T = '#008484';

const Key = ({ at, outer = Y, rest = Y }: { at: P; outer?: string; rest?: string }) => (
  <g fill="none" strokeWidth="2.6">
    <circle cx={at[0]} cy={at[1]} r="33" stroke={outer} />
    <circle cx={at[0]} cy={at[1]} r="27" stroke={rest} />
    <circle cx={at[0]} cy={at[1]} r="13.5" stroke={rest} />
  </g>
);

const GRID = 15.34;
const gridDots: React.ReactNode[] = [];
for (let i = 0; i < 10; i++) {
  for (let j = 0; j < 10; j++) {
    const major = i === 0 && j === 0;
    gridDots.push(
      <rect
        key={`${i}-${j}`}
        x={i * GRID}
        y={j * GRID}
        width={major ? 2 : 1.6}
        height={major ? 2 : 1.6}
        fill={major ? '#dcdcdc' : i === 0 || j === 0 ? '#b0b0b0' : '#949494'}
      />
    );
  }
}

const PcbCanvas = () => (
  <Canvas viewBox="56 205 2673 1736">
    <defs>
      <pattern id="pcbgrid" patternUnits="userSpaceOnUse" x="2267" y="1104" width={GRID * 10} height={GRID * 10}>
        {gridDots}
      </pattern>
    </defs>
    <rect x="56" y="205" width="2673" height="1736" fill="url(#pcbgrid)" />
    <path d={outlinePath} fill="none" stroke={Y} strokeWidth="2.6" strokeLinejoin="round" />
    {keys.map((k, i) => <Key key={i} at={k} />)}
    <Key at={a(310, 1505)} outer={T} rest={T} />
    <Key at={a(582, 1520)} outer={T} />
    {holes.map(([p, r], i) => (
      <circle key={i} cx={p[0]} cy={p[1]} r={r} fill="none" stroke={Y} strokeWidth="2.6" />
    ))}
    <path d="M56 597.5H128M88.5 557V637" stroke="#fff" strokeWidth="1.5" />
  </Canvas>
);

const Chevron = ({ dir = 'down', size = 16, color = '#555' }: { dir?: 'down' | 'up' | 'left' | 'right'; size?: number; color?: string }) => {
  const d = { down: 'M2 5l6 7 6-7', up: 'M2 11l6-7 6 7', left: 'M11 2 5 8l6 6', right: 'M5 2l6 6-6 6' }[dir];
  return (
    <IconSvg viewBox="0 0 16 16" $w={size} $h={size}>
      <path d={d} fill="none" stroke={color} strokeWidth="1.8" />
    </IconSvg>
  );
};

const runningApps: [string, boolean][] = [
  ['chrome', false], ['figure', false], ['orange', false], ['folder', true], ['xr', true], ['chrome', true],
  ['calc', true], ['telegram', true], ['notepad', true], ['arduino', true], ['ps', true], ['vpn', true]
];

const Tray = ({ children }: { children: React.ReactNode }) => (
  <TraySlot>
    <IconSvg viewBox="0 0 40 40" $w={40} $h={40}>{children}</IconSvg>
  </TraySlot>
);

export default function App() {
  return (
    <Window>
      <GlobalStyle />
      <TitleBar>
        <IconSvg viewBox="0 0 32 32" $w={32} $h={32}>
          <rect width="32" height="32" fill="#1a7a1a" />
          <path d="M2 32V0M7 20V0M12 14V0M18 32V20l8-8M24 32v-8M2 8h3" stroke="#e8dca0" strokeWidth="2.5" fill="none" />
        </IconSvg>
        <TitleText>Pcbnew — C:\Users\ccadic\CloudStation\ingenico\ingenico\ingenico.kicad_pcb</TitleText>
        <WinButton>
          <IconSvg viewBox="0 0 20 20" $w={20} $h={20}><path d="M0 10h20" stroke="#222" strokeWidth="1.6" /></IconSvg>
        </WinButton>
        <WinButton>
          <IconSvg viewBox="0 0 20 20" $w={20} $h={20}><path d="M1 5h14v14H1zM5 5V1h14v14h-4" fill="none" stroke="#222" strokeWidth="1.6" /></IconSvg>
        </WinButton>
        <WinButton>
          <IconSvg viewBox="0 0 20 20" $w={20} $h={20}><path d="M0 0l20 20M20 0 0 20" stroke="#222" strokeWidth="1.6" /></IconSvg>
        </WinButton>
      </TitleBar>
      <MenuBar>
        {['Fichiers', 'Editer', 'Affichage', 'Placer', 'Routage', 'Inspecter', 'Outils', 'Préférences', 'Aide'].map(m => (
          <span key={m}>{m}</span>
        ))}
      </MenuBar>

      <Toolbar $h={65} $pt={2}>
        <Tool><Icon name="save" /></Tool>
        <HSep />
        <Tool><Icon name="setup" /></Tool>
        <HSep />
        <Tool><Icon name="page" /></Tool>
        <Tool><Icon name="print" /></Tool>
        <Tool><Icon name="plot" /></Tool>
        <HSep />
        <Tool><Icon name="undo" w={38} /></Tool>
        <Tool><Icon name="redo" w={38} /></Tool>
        <HSep />
        <Tool><Icon name="find" /></Tool>
        <HSep />
        <Tool $w={57}><Icon name="refresh" w={38} /></Tool>
        <Tool><Icon name="zin" w={40} /></Tool>
        <Tool><Icon name="zout" w={40} /></Tool>
        <Tool><Icon name="zfit" w={40} /></Tool>
        <Tool><Icon name="zsel" w={40} /></Tool>
        <HSep $w={29} />
        <Tool><IconSvg viewBox="0 0 48 48" $w={44} $h={44}><Footprint /></IconSvg></Tool>
        <Tool><Icon name="inspect" /></Tool>
        <HSep />
        <Tool><Icon name="net" /></Tool>
        <Tool><Icon name="imp" /></Tool>
        <Tool><Icon name="bug" /></Tool>
        <HSep />
        <Combo $w={199} $white $ml={1}>
          <ComboLabel><LayerDot />F.Cu (PgUp)</ComboLabel>
          <Chevron />
        </Combo>
        <Tool><Icon name="via" /></Tool>
        <HSep />
        <Tool><Icon name="sch" /></Tool>
        <HSep />
        <Tool><Icon name="term" /></Tool>
        <HSep $w={32} />
        <Tool $w={64}><Icon name="route" w={55} h={52} /></Tool>
        <Tool $w={64}><Icon name="key" w={56} h={52} /></Tool>
        <Tool $w={64}><Icon name="tune" w={57} h={52} /></Tool>
        <Tool $w={64}><Icon name="tracks" w={55} h={52} /></Tool>
      </Toolbar>

      <Toolbar $h={58}>
        <Combo $w={345} $ml={2}>
          <span>Piste: 0,250 mm (9,84 mils) *</span>
          <Chevron />
        </Combo>
        <Combo $w={447} $ml={3}>
          <span>Via: 0,80 / 0,40 mm (31,5 / 15,7 mils) *</span>
          <Chevron />
        </Combo>
        <HSep $w={40} />
        <Icon name="diff" w={46} h={46} />
        <HSep $w={36} />
        <Combo $w={470}>
          <span>Grille: 1,0000 mm (39,37 mils)</span>
          <Chevron />
        </Combo>
        <HSep $w={36} />
        <Combo $w={198}>
          <span>Zoom Auto</span>
          <Chevron />
        </Combo>
      </Toolbar>

      <Middle>
        <VBar items={leftTools} w={56} />
        <CanvasColumn>
          <CanvasRow>
            <PcbCanvas />
            <VScroll>
              <Chevron dir="up" />
              <VThumb />
              <Chevron dir="down" />
            </VScroll>
          </CanvasRow>
          <HScroll>
            <Chevron dir="left" />
            <HThumb />
            <Chevron dir="right" />
          </HScroll>
        </CanvasColumn>
        <WhiteLine />
        <VBar items={rightTools} w={54} />
        <Sash />
        <LayerPanel>
          <PanelCaption>Gestionnaire de Couches</PanelCaption>
          <TabStrip>
            <Tab $active>Couches</Tab>
            <Tab>Éléments</Tab>
          </TabStrip>
          <LayerList>
            {layers.map(([name, color], i) => (
              <LayerRow key={name}>
                {i === 0 && <ActiveArrow />}
                <Swatch $c={color} />
                <Check>
                  <IconSvg viewBox="0 0 20 20" $w={20} $h={20}>
                    <path d="M2 10l6 6L18 5" fill="none" stroke="#333" strokeWidth="1.4" />
                  </IconSvg>
                </Check>
                {name}
              </LayerRow>
            ))}
          </LayerList>
        </LayerPanel>
      </Middle>

      <MsgPanel>
        {messages.map(([label, w]) => (
          <MsgCol key={label} $w={w}>
            <span>{label}</span>
            <span>0</span>
          </MsgCol>
        ))}
      </MsgPanel>

      <StatusBar>
        <StatusCell $w={1423} />
        <StatusCell $w={119}>Z 4,28</StatusCell>
        <StatusCell $w={347}>X 18,000000  Y 57,000000</StatusCell>
        <StatusCell $w={537}>dx 18,000000  dy 57,000000  dist 59,775</StatusCell>
        <StatusCell $w={394}>grid X 1,000000  Y 1,000000</StatusCell>
        <StatusCell $w={94}>mm</StatusCell>
      </StatusBar>

      <Taskbar>
        <StartButton>
          <IconSvg viewBox="0 0 32 32" $w={33} $h={32}>
            <path d="M0 4.5 13.5 2.6V15H0zM15 2.4 32 0v15H15zM0 17h13.5v12.4L0 27.5zM15 17h17v15l-17-2.4z" fill="#fff" />
          </IconSvg>
        </StartButton>
        <SearchBox>
          <IconSvg viewBox="0 0 32 32" $w={32} $h={32}>
            <circle cx="20" cy="12" r="10" fill="none" stroke="#222" strokeWidth="2.4" />
            <path d="M13 20 2 31" stroke="#222" strokeWidth="2.6" />
          </IconSvg>
          Taper ici pour rechercher
        </SearchBox>
        <TaskSlot>
          <IconSvg viewBox="0 0 32 32" $w={32} $h={32}>
            <circle cx="16" cy="16" r="13" fill="none" stroke="#fff" strokeWidth="4" />
          </IconSvg>
        </TaskSlot>
        <TaskSlot>
          <IconSvg viewBox="0 0 32 32" $w={32} $h={32}>
            <path d="M1 3h30M1 29h30M5 9v14h15V9zM26 7h4v4h-4zM26 15h4v12h-4z" fill="none" stroke="#fff" strokeWidth="2" />
          </IconSvg>
        </TaskSlot>
        {runningApps.map(([name, running], i) => (
          <TaskSlot key={i} $running={running}>
            <TaskIcon name={name} />
            {i === 5 && <TaskOverlay><TaskIcon name="bugOverlay" w={26} h={44} /></TaskOverlay>}
            {name === 'telegram' && <TaskBadge>132</TaskBadge>}
          </TaskSlot>
        ))}
        <TaskSlot $running $current>
          <TaskIcon name="kicad" w={46} />
        </TaskSlot>
        <CurrentEdge />
        <TrayGroup>
          <Tray><path d="M10 29 20 11l10 18" fill="none" stroke="#fff" strokeWidth="2" /></Tray>
          <Tray><path d="M5 5h30v24H5zM5 34h30" fill="none" stroke="#fff" strokeWidth="2.6" /><path d="M20 9l7 9h-4v7h-6v-7h-4z" fill="#fff" /></Tray>
          <Tray><path d="M6 8 30 2v30L6 36z" fill="none" stroke="#fff" strokeWidth="2.4" /><path d="M13 18a8 8 0 0 1 13 0M25 24a8 8 0 0 1-13 0" fill="none" stroke="#fff" strokeWidth="2" /><circle cx="30" cy="30" r="7" fill="#f59a0e" /></Tray>
          <Tray><path d="M10 2v8M18 2v8M6 10h16v6H6zM10 16h20v18H10z" fill="none" stroke="#fff" strokeWidth="2.4" /><rect x="14" y="20" width="12" height="10" fill="#fff" /></Tray>
          <Tray><path d="M8 34a22 22 0 0 1 22-24M15 34a15 15 0 0 1 15-17M22 34a8 8 0 0 1 8-10" fill="none" stroke="#8a949c" strokeWidth="2.4" /><circle cx="29" cy="32" r="3.5" fill="#fff" /></Tray>
          <Tray><path d="M7 15h7l8-7v24l-8-7H7z" fill="none" stroke="#fff" strokeWidth="2.2" /><path d="M27 12c3 5 3 11 0 16M32 8c4 8 4 16 0 24" fill="none" stroke="#8a949c" strokeWidth="2" /></Tray>
          <Tray><path d="M10 30 25 6c2-3 7-1 5 3L17 30c-2 4-7 2-6-1l10-18M28 20c5 0 6 4 2 8M8 37c4-3 7-1 11-3" fill="none" stroke="#fff" strokeWidth="2.2" /></Tray>
          <ClockCol $w={70} $ml={16}><span>FRA</span><span>FR</span></ClockCol>
          <ClockCol $w={148}><span>00:32</span><span>18/05/2022</span></ClockCol>
          <NotifySlot>
            <IconSvg viewBox="0 0 32 40" $w={32} $h={40}>
              <path d="M0 0h32v40H0z" fill="#fff" />
              <path d="M4 10h24M4 20h24M4 30h14" stroke="#222" strokeWidth="4" />
            </IconSvg>
            <NotifyBadge>27</NotifyBadge>
          </NotifySlot>
        </TrayGroup>
      </Taskbar>
    </Window>
  );
}
